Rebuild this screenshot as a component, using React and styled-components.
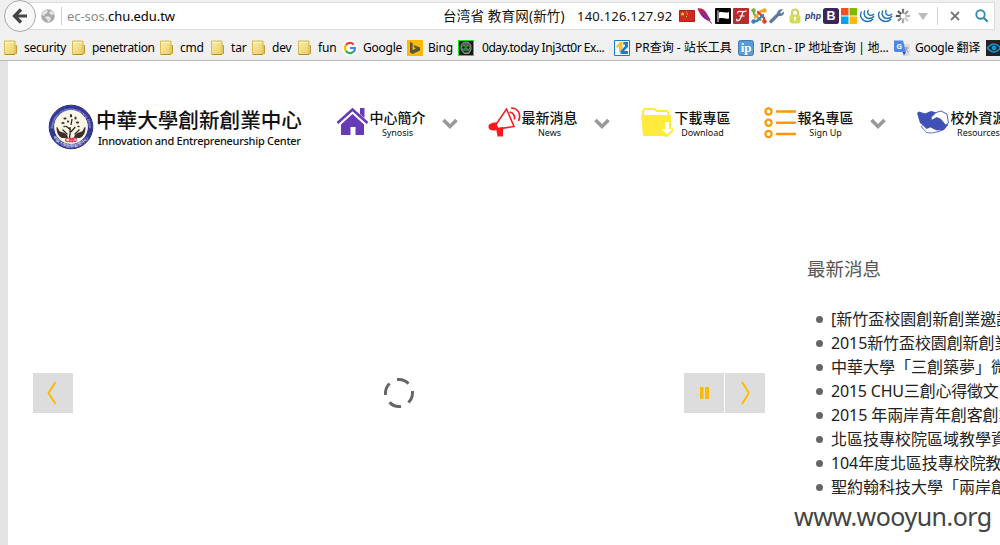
import React from "react";
import styled, { createGlobalStyle } from "styled-components";

const Global = createGlobalStyle`
  * { box-sizing: border-box; }
  body { margin: 0; background: #fff; overflow: hidden; font-family: "Noto Sans", "Noto Sans CJK SC", sans-serif; }
  svg { display: block; flex: none; }
`;

const Window = styled.div`
  width: 1000px;
  height: 545px;
  display: flex;
  flex-direction: column;
  overflow: hidden;
`;

/* ---------- browser chrome ---------- */
const Chrome = styled.header`
  flex: none;
  height: 61px;
  background: #f0f0f0;
  border-bottom: 1px solid #b9b9b9;
  display: flex;
  flex-direction: column;
`;
const AddressRow = styled.div`
  height: 34px;
  display: flex;
  align-items: flex-start;
  padding-left: 4px;
`;
const BackButton = styled.button`
  width: 32px;
  height: 32px;
  flex: none;
  margin: 0 -16px 0 0;
  padding: 0;
  border: 1px solid #a9a9a9;
  border-radius: 50%;
  background: #f7f7f7;
  display: grid;
  place-items: center;
  z-index: 1;
`;
const AddressField = styled.div`
  width: 975px;
  height: 28px;
  margin-top: 2px;
  background: #fff;
  border: 1px solid #dcdcdc;
  border-left: 0;
  display: flex;
  align-items: center;
  padding: 0 0 1px 21px;
`;
const Divider = styled.i`
  width: 1px;
  height: 18px;
  background: #cfcfcf;
  margin: 0 ${(p) => p.$right}px 0 ${(p) => p.$left}px;
`;
const Url = styled.span`
  width: 376px;
  flex: none;
  white-space: nowrap;
  font-size: 13px;
  line-height: 20px;
  letter-spacing: -0.07px;
  padding-top: 1px;
  color: #000;
  span { color: #8a8a8a; }
`;
const HostInfo = styled.span`
  width: ${(p) => p.$width}px;
  flex: none;
  white-space: nowrap;
  font-size: ${(p) => p.$size}px;
  line-height: 20px;
  letter-spacing: ${(p) => p.$spacing}px;
  color: #111;
`;
const AddonIcons = styled.div`
  display: flex;
  align-items: center;
  gap: 2px;
`;
const FieldEnd = styled.div`
  display: flex;
  align-items: center;
  padding-left: 7px;
`;
const SearchSlot = styled.span`
  margin-left: 15px;
`;

const BookmarkBar = styled.nav`
  height: 26px;
  margin-top: 1px;
  padding: 1px 0 0 3px;
  display: flex;
  align-items: center;
`;
const Bookmark = styled.a`
  width: ${(p) => p.$width}px;
  flex: none;
  display: flex;
  align-items: center;
  gap: ${(p) => p.$gap || 5}px;
  white-space: nowrap;
  font-size: 12px;
  line-height: 18px;
  letter-spacing: ${(p) => p.$spacing || 0}px;
  color: #000;
`;
const BookmarkLabel = styled.span`
  padding-top: 1px;
`;

/* ---------- page ---------- */
const Page = styled.main`
  flex: 1;
  width: 1300px;
  border-left: 8px solid #e3e4e4;
  background: #fff;
  display: flex;
  flex-direction: column;
  font-family: "Noto Sans", "Noto Sans CJK TC", sans-serif;
`;
const SiteHeader = styled.div`
  height: 129px;
  padding: 43px 0 0 40px;
  display: flex;
  align-items: flex-start;
`;
const Brand = styled.div`
  width: 288px;
  flex: none;
  display: flex;
  gap: 2px;
`;
const BrandText = styled.div`
  display: flex;
  flex-direction: column;
  white-space: nowrap;
  color: #111;
`;
const BrandName = styled.span`
  font: 500 20.6px/28px "Noto Sans CJK TC", sans-serif;
  padding-top: 1px;
`;
const BrandSub = styled.span`
  font-size: 11px;
  line-height: 16px;
  font-weight: 500;
  letter-spacing: -0.28px;
  padding-left: 2px;
`;
const NavItem = styled.a`
  width: ${(p) => p.$width}px;
  flex: none;
  display: flex;
  align-items: flex-start;
  padding-top: 3px;
`;
const IconSlot = styled.span`
  width: 33px;
  flex: none;
`;
const NavLabel = styled.span`
  width: 57px;
  display: flex;
  flex-direction: column;
  align-items: center;
  white-space: nowrap;
  font: 500 14px/20px "Noto Sans CJK TC", sans-serif;
  color: #111;
  small {
    font: 400 9px/12px "Noto Sans", sans-serif;
    letter-spacing: -0.05px;
  }
`;
const ChevronSlot = styled.span`
  padding: 11px 0 0 15px;
`;

const Content = styled.div`
  display: flex;
  align-items: flex-start;
`;
const Slider = styled.section`
  width: 732px;
  height: 223px;
  margin-left: 25px;
  display: flex;
  align-items: flex-end;
`;
const SlideButton = styled.button`
  width: 40px;
  height: 40px;
  padding: 0;
  border: 0;
  margin-right: ${(p) => p.$after || 0}px;
  background: #ddd;
  display: grid;
  place-items: center;
`;
const Loader = styled.div`
  width: 32px;
  margin-right: 269px;
  padding-bottom: 4px;
`;
const News = styled.section`
  flex: 1;
  padding: 64px 0 0 42px;
`;
const NewsTitle = styled.h2`
  margin: 0 0 25px;
  font: 400 18.5px/28px "Noto Sans CJK TC", sans-serif;
  color: #555;
`;
const NewsList = styled.ul`
  list-style: none;
  margin: 0;
  padding: 0 0 0 9px;
`;
const NewsRow = styled.li`
  height: 24px;
  display: flex;
  align-items: center;
  gap: 8px;
  white-space: nowrap;
  font: 400 16px/24px "Noto Sans", "Noto Sans CJK TC", sans-serif;
  letter-spacing: ${(p) => p.$spacing || 0}px;
  color: #222;
  &::before {
    content: "";
    width: 7px;
    height: 7px;
    border-radius: 50%;
    background: #666;
  }
`;
const Watermark = styled.div`
  position: absolute;
  left: 794px;
  top: 498px;
  font: 400 25px/36px "Noto Sans", sans-serif;
  letter-spacing: -0.52px;
  color: #444;
  white-space: nowrap;
`;

/* ---------- icons ---------- */
const Svg = ({ w = 16, h = 16, children }) => (
  <svg width={w} height={h} viewBox={`0 0 ${w} ${h}`} fill="none">{children}</svg>
);

const BackArrow = () => (
  <Svg w={16} h={16}><path d="M9 1.5 2.5 8 9 14.5M3 8h12" stroke="#444" strokeWidth="3.2" /></Svg>
);
const Globe = () => (
  <Svg w={14} h={14}>
    <circle cx="7" cy="7" r="6.8" fill="#aaa" />
    <path d="M2 3 5 1l2 1-1 2-2 1-1 2-2-1zM8 3l3-1 2 3-2 1-2-1zM4 8l3-1 3 2-1 3-2 1-1-3-2-1z" fill="#e5e5e5" />
  </Svg>
);
const Folder = () => (
  <Svg>
    <path d="M9.5 5.5h4v8h-4z" fill="#e8ca67" stroke="#c49b35" />
    <path d="M1.5 1h10.5v13.500h-10.5z" fill="url(#folderFill)" stroke="#d9ba58" />
    <path d="M2.5 2.5h8" stroke="#fff7cc" />
    <path d="M2 14.5h10" stroke="#b58c28" />
    <defs><linearGradient id="folderFill" x1="0" y1="0" x2="1" y2="1"><stop stopColor="#fbefab" /><stop offset="1" stopColor="#e9cc65" /></linearGradient></defs>
  </Svg>
);
const GoogleG = () => (
  <Svg>
    <circle cx="8" cy="8" r="8" fill="#fff" />
    <path d="M3.9 5.1A5 5 0 0 1 11.7 4.4" stroke="#ea4335" strokeWidth="2.2" />
    <path d="M3.9 5.1a5 5 0 0 0 0 5.8" stroke="#fbbc05" strokeWidth="2.2" />
    <path d="M3.9 10.9a5 5 0 0 0 7.4 1" stroke="#34a853" strokeWidth="2.2" />
    <path d="M8 8h5a5 5 0 0 1-1.8 4" stroke="#4285f4" strokeWidth="2.2" />
  </Svg>
);
const BingIcon = () => (
  <Svg><path d="M0 0h16v16H0z" fill="#ffb900" /><path d="m3 2 2.6 1v7.3l3.4-2L7.3 7.4 6.4 5 13 7.5v3L5.6 14 3 12.5z" fill="#5b5440" /></Svg>
);
const SkullIcon = () => (
  <Svg>
    <path d="M.5.5h15v15H.5z" fill="#151515" stroke="#1de01d" />
    <path d="M3 6.500c0-6 10-6 10 0v3l-2 4H6l-3-4z" fill="#56605a" stroke="#8d938e" />
    <circle cx="5.5" cy="7.5" r="1.8" fill="#122a15" stroke="#2fa83f" /><circle cx="10.2" cy="7.5" r="1.8" fill="#122a15" stroke="#2fa83f" />
    <path d="M6 11.500h4" stroke="#222" />
  </Svg>
);
const PrIcon = () => (
  <Svg>
    <path d="M.5.5h15v15H.5z" fill="#fff" stroke="#1780c4" />
    <path d="M2 6 6 2h2.500v6L5 13V6.500L3 8z" fill="#f5c03a" />
    <path d="M9.500 2H14v5l-4 4h4v3H6.500v-3L11 6V4.500H9z" fill="#1780c4" />
  </Svg>
);
const IpIcon = () => (
  <Svg>
    <rect x=".5" y=".5" width="15" height="15" rx="2" fill="#5b9ad2" stroke="#4380b8" />
    <text x="8" y="11.500" fontFamily="Liberation Serif, serif" fontWeight="700" fontSize="13" textAnchor="middle" fill="#fff">ip</text>
  </Svg>
);
const TranslateIcon = () => (
  <Svg>
    <path d="M7 4h8.5v12H9z" fill="#d9dbe0" />
    <path d="M0 .5h9L12 12H1.5L0 11z" fill="#4c86e8" />
    <path d="m8.5 12 3.5 0-2 3.5z" fill="#2a56c6" />
    <text x="5" y="9" fontFamily="Roboto, sans-serif" fontWeight="700" fontSize="8" textAnchor="middle" fill="#fff">G</text>
    <path d="M10.5 8h4M12.5 7v1c0 2-1 3-2 4m1-3 3 3.5" stroke="#8c949f" strokeWidth=".8" />
  </Svg>
);
const EyeIcon = () => (
  <Svg><path d="M0 0h16v16H0z" fill="#222" /><path d="M1.5 8Q8 0 14.5 8 8 16 1.5 8z" stroke="#1793d1" strokeWidth="1.6" /><circle cx="8" cy="8" r="2.4" fill="#1793d1" /></Svg>
);

const Flag = () => (
  <Svg><path d="M.5 2.5h15v11H.5z" fill="#d22a20" stroke="#a9221b" /><path d="m3.6 4 .6 1.3 1.4.1-1 1 .3 1.4-1.3-.7-1.2.7.2-1.4-1-1 1.4-.1z" fill="#ffd83b" /><path d="M7 4h1M8 6h1M7 8.5h1" stroke="#ffd83b" /></Svg>
);
const Feather = () => (
  <Svg>
    <path d="M.5.5c4-.8 7 1.500 9 4.500l4 7-1.500.8C7 11.500 2.500 6.500.5.500z" fill="#cf1d48" />
    <path d="M4.500 2.500 9.500 6l4 6-1.500.8C7.500 11.500 4.500 7.500 3 4z" fill="#7a259d" />
    <path d="M2 1.500c4 3 8 8 12.500 14" stroke="#e0452a" strokeWidth=".6" /><path d="m12 12 2.500 3.500" stroke="#6a4b8f" />
  </Svg>
);
const BlackFlag = () => (
  <Svg><rect width="16" height="16" rx="1" fill="#050505" /><path d="M3 2.500V14" stroke="#fff" /><path d="M4 4.500c3-1.500 6 1 10-.5v6.500c-4 1-7-1.500-10 0z" fill="#fff" /></Svg>
);
const ScriptF = () => (
  <Svg><rect width="16" height="16" rx="1" fill="#b62d2d" /><path d="M4.500 5.500C4 3.500 6.500 3 8.500 3.500c2 .4 3.500.3 5-.8M9.800 4C8.800 8 7.500 13 4.500 12.800 3 12.500 3.500 11 4.500 11.300M6.500 8h5" stroke="#fff" strokeWidth="1.200" /></Svg>
);
const Joomla = () => (
  <Svg>
    <g strokeWidth="2.300" strokeLinecap="round" fill="none">
      <path d="M3 3v3l6.500 6" stroke="#76b043" /><path d="M13 3h-3L4 9.500" stroke="#f7a325" />
      <path d="M13 13v-3L7 4" stroke="#e0402a" /><path d="M3 13h3l6-6" stroke="#3e7fc0" />
    </g>
    <circle cx="2.500" cy="2.500" r="2.200" fill="#76b043" /><circle cx="13.500" cy="2.500" r="2.200" fill="#f7a325" />
    <circle cx="2.500" cy="13.500" r="2.200" fill="#3e7fc0" /><circle cx="13.500" cy="13.500" r="2.200" fill="#e0402a" />
  </Svg>
);
const Wrench = () => (
  <Svg><path d="m2 13.500 7-7" stroke="#60799d" strokeWidth="3.200" strokeLinecap="round" /><path d="M14 1.500 11.500 4l-.2 1 1 .5L15 3.500c.5 3-2 5-5 4.500L8 6c0-3 2.500-5.500 6-4.500z" fill="#60799d" /></Svg>
);
const Lock = () => (
  <Svg><path d="M5 8V4.500c0-4 6-4 6 0V8" stroke="#cdd363" strokeWidth="2" /><rect x="2.500" y="6.500" width="11" height="9" rx="3" fill="#d4db5b" /><circle cx="8" cy="10" r="1.200" fill="#fff" /><path d="M8 10v3" stroke="#fff" strokeWidth="1.200" /></Svg>
);
const Php = () => (
  <Svg><text x="8" y="10.500" fontFamily="Liberation Sans, sans-serif" fontStyle="italic" fontWeight="700" fontSize="9" textAnchor="middle" fill="#253c87" textLength="16" lengthAdjust="spacingAndGlyphs">php</text></Svg>
);
const Bootstrap = () => (
  <Svg><rect width="16" height="16" rx="2.500" fill="#3b2657" /><text x="8" y="12.300" fontFamily="Liberation Sans, sans-serif" fontWeight="700" fontSize="12.500" textAnchor="middle" fill="#fff">B</text></Svg>
);
const Windows = () => (
  <Svg><path d="M0 0h7.500v7.500H0z" fill="#f25022" /><path d="M8.500 0H16v7.500H8.500z" fill="#7fba00" /><path d="M0 8.500h7.500V16H0z" fill="#00a4ef" /><path d="M8.500 8.500H16V16H8.500z" fill="#ffb900" /></Svg>
);
const JQuery = () => (
  <Svg><g stroke="#1f74b8" strokeWidth="1.400" strokeLinecap="round"><path d="M2.300 4C0 8.500 3.500 13.500 8.500 13.500c2.500 0 4-.7 5.300-2.300" /><path d="M5.500 3C4 7 6.800 10.500 10 10.500c2.200 0 3.500-.6 4.700-2" /><path d="M9 2.500c-1 2.500.5 4.700 2.500 4.900 1.500.1 2.500-.4 3.200-1.200" /></g></Svg>
);
const Spinner = () => (
  <Svg>
    {["#777", "#999", "#bbb", "#ccc", "#aaa", "#888", "#555", "#555"].map((c, i) => (
      <path key={i} d="M8 .8v4.700" stroke={c} strokeWidth="2.200" transform={`rotate(${i * 45} 8 8)`} />
    ))}
  </Svg>
);
const DropArrow = () => (
  <Svg w={10} h={8}><path d="M0 1h10L5 8z" fill="#bbb" /></Svg>
);
const StopIcon = () => (
  <Svg w={10} h={10}><path d="m1 1 8 8M9 1 1 9" stroke="#777" strokeWidth="1.800" /></Svg>
);
const SearchIcon = () => (
  <Svg w={14} h={14}><circle cx="5.500" cy="5.500" r="4.200" stroke="#3f88ae" strokeWidth="1.900" /><path d="m8.700 8.700 4 4" stroke="#3f88ae" strokeWidth="2.300" /></Svg>
);

const Emblem = () => (
  <Svg w={46} h={46}>
    <circle cx="23" cy="23" r="21.800" fill="#faf7ea" stroke="#292c83" />
    <circle cx="23" cy="23" r="19.200" stroke="#343794" strokeWidth="5" />
    <circle cx="23" cy="23" r="16.700" fill="#faf5e4" />
    <defs>
      <path id="arcTop" d="M5 24.500A18 18 0 1 1 41 24.500" />
      <path id="arcBottom" d="M5 33a20.800 20.800 0 0 0 36 0" />
    </defs>
    <text fontFamily="Noto Sans, sans-serif" fontSize="3.400" fill="#e3e3f8"><textPath href="#arcTop" textLength="56" lengthAdjust="spacingAndGlyphs">Innovation and Entrepreneurship Center</textPath></text>
    <text fontFamily="Noto Sans CJK TC, sans-serif" fontSize="4.200" fill="#fff"><textPath href="#arcBottom" textLength="42">中華大學創新創業中心</textPath></text>
    <path d="M21.500 34c1-4 .8-7 .5-11m.8 5 4.500-5m-4.500 3-5-4m5.200-1 1-6" stroke="#33291f" strokeWidth="1.300" />
    <g fill="#33342b"><ellipse cx="23" cy="11.800" rx="1.200" ry="1.700" /><ellipse cx="17" cy="14.500" rx="1.600" ry="1" /><ellipse cx="27.500" cy="14" rx="1.100" ry="1.600" /><ellipse cx="15" cy="19" rx="1.600" ry="1" /><ellipse cx="20" cy="17.500" rx="1.200" ry="1" /><ellipse cx="29.500" cy="18.500" rx="1.700" ry="1" /><ellipse cx="30.500" cy="22.500" rx="1.300" ry=".8" /><ellipse cx="16.500" cy="22.500" rx="1.300" ry=".8" /></g>
    <path d="M8.500 23c1.800 0 2 3.500 3.500 4.500 3 1 6 1.500 7.500 4.500l.5 2h-6C10 32 8.500 28 8.500 23zM37.500 23c-1.800 0-2 3.500-3.500 4.500-3 1-6 1.500-7.500 4.500l-.5 2h6c4-2 5.500-6 5.500-11z" fill="#39302a" />
    <path d="m14.500 25.500 5 5M31.500 25.500l-5 5" stroke="#39302a" strokeWidth="1.300" />
    <text x="23" y="38.400" fontFamily="Liberation Serif, serif" fontWeight="700" fontSize="5.500" textAnchor="middle" textLength="12" lengthAdjust="spacingAndGlyphs" fill="#e01010" stroke="#e01010" strokeWidth=".3">CHU</text>
  </Svg>
);
const Home = () => (
  <Svg w={33} h={30}>
    <path d="M1.500 16 16.500 2.500l15 13.500" stroke="#673ab7" strokeWidth="2.600" />
    <path d="M5 17.500 16.500 7 28 17.500V28h-8.500v-8h-5v8H5zM24 1h4.500v10L24 7z" fill="#673ab7" />
  </Svg>
);
const Megaphone = () => (
  <Svg w={34} h={32}>
    <path d="M8 17.500 18.500 2 26 19.500 10 22z" fill="#fff" stroke="#f8191c" strokeWidth="1.500" />
    <path d="M9 15.500c-4-.5-9 1-8.500 4.500.5 4 5 4 8.500 3z" fill="#f8191c" /><path d="m8 21 7-1v9.500H9.500z" fill="#f8191c" />
    <path d="M21.500 5c4.500 1 5.500 3.500 5 7.500M23 1c7 0 10.500 6 7.500 13" stroke="#f8191c" strokeWidth="1.600" />
  </Svg>
);
const DownloadFolder = () => (
  <Svg w={33} h={31}>
    <path d="M2 9V4l2-2h9l3 2h10l1.500 2v3" stroke="#ffeb3b" strokeWidth="2" />
    <path d="M0 8h30v13l-7 8H2z" fill="#ffeb3b" />
    <path d="M23 15h5v6h4v4l-6 5h-2l-5-6v-3h4z" fill="#ffeb3b" />
    <path d="M24 15h4v7h3.500L26 27.500 20.500 22H24z" fill="#fff" />
  </Svg>
);
const ListIcon = () => (
  <Svg w={34} h={32}>
    <g stroke="#ff9800"><g strokeWidth="2.200"><circle cx="4.500" cy="4.500" r="3.100" /><circle cx="4.500" cy="15.800" r="3.100" /><circle cx="4.500" cy="27" r="3.100" /></g><path d="M13 4.500h18M13 15.800h18M13 27h18" strokeWidth="2.400" strokeLinecap="round" /></g>
  </Svg>
);
const Handshake = () => (
  <Svg w={33} h={30}>
    <path d="m0 6 2-1.500 6 2L14 4l8 2 7 7 2 5-4 5-6 2-3-3-7 1-4-4-4-3z" fill="#3f51b5" />
    <path d="m19 5.500 5-1.500 6 3 1.500 9-3 2-5-6-4-1.500-4 2.500c-2-.5-1.500-3 0-4z" fill="#fff" stroke="#3f51b5" strokeWidth=".9" />
    <path d="m6 17-1.500 3 5 5.500 5 .5 8-1.500 4-3.500-3 1-4 1-6-3-4 1.500-2.500-2z" fill="#fff" stroke="#3f51b5" strokeWidth=".8" />
    <path d="m13 14 4-2 5 .5 6 7-2.500 3-4 1-7-3z" fill="#3f51b5" />
  </Svg>
);
const Chevron = () => (
  <Svg w={18} h={12}><path d="m2.500 2 6.500 6.500L15.500 2" stroke="#999" strokeWidth="3.600" /></Svg>
);

const bookmarks = [
  ["security", 68, -0.25, Folder],
  ["penetration", 88, -0.32, Folder],
  ["cmd", 51, -0.2, Folder],
  ["tar", 41, -0.1, Folder],
  ["dev", 46, -0.2, Folder],
  ["fun", 45, -0.1, Folder],
  ["Google", 65, -0.25, GoogleG],
  ["Bing", 51, -0.2, BingIcon],
  ["0day.today Inj3ct0r Ex...", 156, -0.47, SkullIcon, 8],
  ["PR查询 - 站长工具", 124, 0, PrIcon],
  ["IP.cn - IP 地址查询 | 地...", 156, -0.22, IpIcon, 6],
  ["Google 翻译", 92, -0.3, TranslateIcon],
  ["", 16, 0, EyeIcon],
];

const addons = [Flag, Feather, BlackFlag, ScriptF, Joomla, Wrench, Lock, Php, Bootstrap, Windows, JQuery, JQuery, Spinner];

const navItems = [
  ["中心簡介", "Synosis", 152, Home, true],
  ["最新消息", "News", 153, Megaphone, true],
  ["下載專區", "Download", 123, DownloadFolder, false],
  ["報名專區", "Sign Up", 153, ListIcon, true],
  ["校外資源", "Resources", 153, Handshake, true],
];

const news = [
  ["[新竹盃校園創新創業邀請賽]", 0],
  ["2015新竹盃校園創新創業競賽", -0.1],
  ["中華大學「三創築夢」微電影", 0],
  ["2015 CHU三創心得徵文比賽", -0.2],
  ["2015 年兩岸青年創客創業營", -0.1],
  ["北區技專校院區域教學資源", 0],
  ["104年度北區技專校院教學", -0.1],
  ["聖約翰科技大學「兩岸創業", 0],
];

export default function App() {
  return (
    <Window>
      <Global />
      <Chrome>
        <AddressRow>
          <BackButton aria-label="Back"><BackArrow /></BackButton>
          <AddressField>
            <Globe />
            <Divider $left={6} $right={5} />
            <Url><span>ec-sos.</span>chu.edu.tw</Url>
            <HostInfo $width={134} $size={13.5} $spacing={0.2}>台湾省 教育网(新竹)</HostInfo>
            <HostInfo $width={102} $size={13} $spacing={0.22}>140.126.127.92</HostInfo>
            <AddonIcons>{addons.map((Icon, i) => <Icon key={i} />)}</AddonIcons>
            <FieldEnd>
              <DropArrow />
              <Divider $left={9} $right={12} />
              <StopIcon />
              <SearchSlot><SearchIcon /></SearchSlot>
            </FieldEnd>
          </AddressField>
        </AddressRow>
        <BookmarkBar>
          {bookmarks.map(([label, width, spacing, Icon, gap], i) => (
            <Bookmark key={i} $width={width} $spacing={spacing} $gap={gap}>
              <Icon />
              {label && <BookmarkLabel>{label}</BookmarkLabel>}
            </Bookmark>
          ))}
        </BookmarkBar>
      </Chrome>
      <Page>
        <SiteHeader>
          <Brand>
            <Emblem />
            <BrandText>
              <BrandName>中華大學創新創業中心</BrandName>
              <BrandSub>Innovation and Entrepreneurship Center</BrandSub>
            </BrandText>
          </Brand>
          {navItems.map(([label, sub, width, Icon, chevron]) => (
            <NavItem key={sub} $width={width}>
              <IconSlot><Icon /></IconSlot>
              <NavLabel>{label}<small>{sub}</small></NavLabel>
              {chevron && <ChevronSlot><Chevron /></ChevronSlot>}
            </NavItem>
          ))}
        </SiteHeader>
        <Content>
          <Slider>
            <SlideButton $after={310} aria-label="Previous">
              <Svg w={12} h={24}><path d="M8.500 1 1.500 12l7 11" stroke="#ffb900" strokeWidth="2" /></Svg>
            </SlideButton>
            <Loader>
              <Svg w={32} h={32}>
                {[0, 90, 180, 270].map((a) => (
                  <path key={a} d="M14 2.600a13.500 13.500 0 0 1 11.500 4" stroke="#666" strokeWidth="3" transform={`rotate(${a} 16 16)`} />
                ))}
              </Svg>
            </Loader>
            <SlideButton $after={1} aria-label="Pause">
              <Svg w={10} h={12}><path d="M1 0h3.500v12H1zM6 0h4v12H6z" fill="#ffb900" /></Svg>
            </SlideButton>
            <SlideButton aria-label="Next">
              <Svg w={8} h={24}><path d="m1 1 7 11-7 11" stroke="#ffb900" strokeWidth="2" /></Svg>
            </SlideButton>
          </Slider>
          <News>
            <NewsTitle>最新消息</NewsTitle>
            <NewsList>
              {news.map(([t, s]) => <NewsRow key={t} $spacing={s}>{t}</NewsRow>)}
            </NewsList>
          </News>
        </Content>
      </Page>
      <Watermark>www.wooyun.org</Watermark>
    </Window>
  );
}
